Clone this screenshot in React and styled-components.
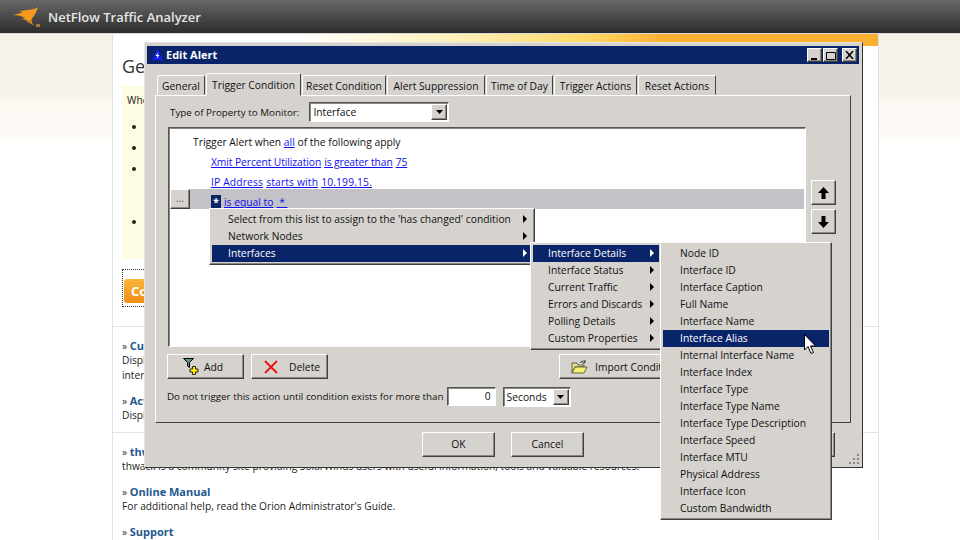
import React from 'react'
import styled, { createGlobalStyle, css } from 'styled-components'

const GlobalStyle = createGlobalStyle`
  html, body { margin: 0; padding: 0; background: #fff; }
  body { width: 960px; height: 540px; overflow: hidden; }
`

const raised = css`
  border: 1px solid;
  border-color: #fff #404040 #404040 #fff;
  box-shadow: inset -1px -1px 0 #8a8782;
`
const sunken = css`
  border: 1px solid;
  border-color: #555 #fff #fff #555;
  box-shadow: inset 1px 1px 0 #8a8782;
`
const uiFont = css`
  font-family: "Open Sans", "Liberation Sans", sans-serif;
  font-size: 10.3px;
  color: #111;
`

const Page = styled.div`
  position: relative;
  width: 960px;
  height: 540px;
  overflow: hidden;
  font-family: "Open Sans", "DejaVu Sans", sans-serif;
  font-size: 10.2px;
  color: #222;
`
const Header = styled.header`
  display: flex;
  align-items: center;
  gap: 6px;
  height: 34px;
  padding-left: 13px;
  box-sizing: border-box;
  background: linear-gradient(#686868, #2c2c2c);
  border-bottom: 1px solid #d8d8d8;
`
const BrandName = styled.div`
  font-size: 13px;
  font-weight: 600;
  color: #e6e6e6;
`
const Main = styled.div`
  display: flex;
  height: 506px;
`
const Gutter = styled.div`
  flex: ${p => p.$fixed ? '0 0 112px' : 1};
  background: linear-gradient(#f5f2e8, #f6f3ec 60px, #fdf7f2 70px, #fdf9f5 100px, #fff 110px);
`
const Column = styled.main`
  width: 767px;
  box-sizing: border-box;
  border-left: 1px solid #e2e2e2;
  border-right: 1px solid #e2e2e2;
  background: #fff;
`
const Banner = styled.div`
  height: 12px;
  background: linear-gradient(90deg, #fff 24%, #fff0b8 45%, #ffd966 62%, #fbb030 72%, #fbb030);
`
const Section = styled.section`
  padding: 0 9px;
`
const Heading = styled.h1`
  margin: 7px 0 7px;
  font-size: 18px;
  line-height: 26px;
  font-weight: 400;
  color: #333;
`
const Note = styled.div`
  background: #fdfbe2;
  width: 700px;
  height: 173px;
  box-sizing: border-box;
  padding: 6px 5px;
  line-height: 16px;
`
const Bullets = styled.ul`
  margin: 8px 0 0;
  padding: 0 0 0 19px;
`
const Bullet = styled.li`
  height: ${p => p.$tall ? 53 : 21}px;
  line-height: 21px;
`
const ActionBox = styled.div`
  display: inline-block;
  margin-top: 10px;
  width: 150px;
  height: 38px;
  box-sizing: border-box;
  padding: 9px 1px 0;
  border: 1px dotted #333;
`
const OrangeButton = styled.div`
  height: 24px;
  line-height: 24px;
  padding-left: 7px;
  border-radius: 3px;
  background: linear-gradient(#fbb43c, #ee8f16);
  color: #fff;
  font-size: 13px;
  font-weight: 700;
`
const Divided = styled.div`
  margin-top: ${p => p.$top}px;
  border-top: 1px solid #e2e2e2;
  padding: 11px 9px 0;
`
const LinkBlock = styled.div`
  margin-bottom: 10px;
  line-height: 15px;
`
const LinkTitle = styled.div`
  height: 15px;
  color: #333;
  b {
    color: #23588f;
    font-size: 11px;
    font-weight: 700;
  }
`

const Dialog = styled.div`
  position: absolute;
  left: 144px;
  top: 42px;
  width: 719px;
  height: 426px;
  box-sizing: border-box;
  padding: 3px 3px 3px 2px;
  background: #d6d3ce;
  border: 1px solid;
  border-color: #e8e6e2 #333 #333 #e8e6e2;
  ${uiFont}
`
const TitleBar = styled.div`
  display: flex;
  align-items: center;
  height: 18px;
  padding: 0 2px 0 5px;
  gap: 3px;
  background: #0a246a;
`
const TitleText = styled.div`
  flex: 1;
  padding-bottom: 1px;
  color: #fff;
  font-size: 11px;
  font-weight: 700;
`
const TitleButton = styled.div`
  ${raised}
  display: flex;
  align-items: center;
  justify-content: center;
  box-sizing: border-box;
  width: 15px;
  height: 14px;
  margin-left: ${p => p.$gap || 0}px;
  background: #d6d3ce;
`
const TabStrip = styled.div`
  display: flex;
  align-items: flex-end;
  height: 22px;
  margin: 9px 0 0 10px;
  gap: 1px;
`
const Tab = styled.div`
  display: flex;
  align-items: center;
  justify-content: center;
  box-sizing: border-box;
  width: ${p => p.$w}px;
  height: ${p => p.$active ? 23 : 20}px;
  padding-top: ${p => p.$active ? 0 : 1}px;
  margin-bottom: ${p => p.$active ? -1 : 0}px;
  background: #d6d3ce;
  border: 1px solid;
  border-color: #fff #404040 transparent #fff;
  border-radius: 2px 2px 0 0;
  position: relative;
  z-index: ${p => p.$active ? 1 : 0};
`
const TabPanel = styled.div`
  margin-left: 8px;
  width: 696px;
  height: 328px;
  box-sizing: border-box;
  padding: 6px 12px 0;
  border: 1px solid;
  border-color: #fff #404040 #404040 #fff;
`
const PropertyRow = styled.div`
  display: flex;
  align-items: center;
  height: 20px;
  padding-left: 2px;
  gap: 10px;
`
const Label = styled.span`
  font-size: 9.8px;
`
const Combo = styled.div`
  ${sunken}
  display: flex;
  align-items: center;
  justify-content: space-between;
  box-sizing: border-box;
  width: ${p => p.$w}px;
  height: 20px;
  margin-left: ${p => p.$push || 0}px;
  padding-left: 3px;
  background: #fff;
`
const ComboArrow = styled.div`
  ${raised}
  display: flex;
  align-items: center;
  justify-content: center;
  box-sizing: border-box;
  width: 16px;
  height: 16px;
  margin-right: 1px;
  background: #d6d3ce;
`
const Editor = styled.div`
  display: flex;
  gap: 5px;
  margin-top: 5px;
`
const ConditionList = styled.div`
  ${sunken}
  width: 638px;
  height: 220px;
  box-sizing: border-box;
  padding: 1px 1px 0;
  background: #fff;
`
const ConditionRow = styled.div`
  display: flex;
  align-items: flex-end;
  height: 20px;
  box-sizing: border-box;
  padding-left: ${p => p.$indent}px;
  gap: 3px;
  letter-spacing: ${p => p.$track || 0}px;
  background: ${p => p.$active ? '#c3c2c6' : 'transparent'};
`
const MoreButton = styled.div`
  ${raised}
  align-self: stretch;
  box-sizing: border-box;
  width: 20px;
  margin-right: 18px;
  text-align: center;
  line-height: 16px;
  background: #d6d3ce;
  color: #555;
`
const Link = styled.a`
  color: #1010ee;
  text-decoration: underline;
`
const Token = styled.span`
  display: inline-block;
  width: 10px;
  height: 13px;
  margin-bottom: 1px;
  line-height: 15px;
  text-align: center;
  background: #0a246a;
  color: #fff;
  font-weight: 700;
`
const SideButtons = styled.div`
  display: flex;
  flex-direction: column;
  gap: 4px;
  padding-top: 53px;
`
const SquareButton = styled.div`
  ${raised}
  display: flex;
  align-items: center;
  justify-content: center;
  box-sizing: border-box;
  width: 25px;
  height: 25px;
  background: #d6d3ce;
`
const ActionRow = styled.div`
  display: flex;
  gap: 7px;
  margin-top: 7px;
  margin-left: -1px;
`
const ActionButton = styled.div`
  ${raised}
  display: flex;
  align-items: center;
  gap: ${p => p.$gap}px;
  box-sizing: border-box;
  width: ${p => p.$w}px;
  height: 25px;
  margin-left: ${p => p.$push || 0}px;
  padding-left: ${p => p.$pad}px;
  background: #d6d3ce;
`
const DelayRow = styled.div`
  display: flex;
  align-items: center;
  height: 21px;
  margin: 7px 0 0 -1px;
  gap: 3px;
`
const DelayInput = styled.div`
  ${sunken}
  box-sizing: border-box;
  width: 49px;
  height: 19px;
  line-height: 17px;
  padding-right: 4px;
  text-align: right;
  background: #fff;
`
const Footer = styled.div`
  display: flex;
  gap: 16px;
  margin: 9px 0 0 275px;
`
const DialogButton = styled.div`
  ${raised}
  box-sizing: border-box;
  width: ${p => p.$w}px;
  height: 25px;
  line-height: 23px;
  text-align: center;
  background: #d6d3ce;
  margin-left: ${p => p.$push || 0}px;
`
const Grip = styled.svg`
  position: absolute;
  right: 2px;
  bottom: 2px;
`
const Menu = styled.div`
  ${raised}
  ${uiFont}
  position: absolute;
  left: ${p => p.$x}px;
  top: ${p => p.$y}px;
  width: ${p => p.$w}px;
  box-sizing: border-box;
  padding: 2px;
  background: #d6d3ce;
  z-index: ${p => p.$z};
`
const MenuItem = styled.div`
  display: flex;
  align-items: center;
  justify-content: space-between;
  box-sizing: border-box;
  height: 17px;
  padding: 0 5px 2px ${p => p.$pad}px;
  background: ${p => p.$on ? '#0a246a' : 'transparent'};
  color: ${p => p.$on ? '#fff' : '#111'};
`
const Pointer = styled.svg`
  position: absolute;
  left: 804px;
  top: 334px;
  z-index: 5;
`

const Logo = () => (
  <svg width="29" height="22" viewBox="0 0 29 22">
    <path d="M25 1C21 4 14 4 6 5L10 6.500L0 9C5 9 9 10 12 12L8 13C12 13 14 14 16 16C19 13 23 8 25 1Z" fill="#f59a1e" />
    <path d="M11 14C15 15 18 17 21 20C19 17 18 15 19 12L16.500 17.500C15 16 13 15 11 14Z" fill="#f59a1e" />
    <path d="M23 18H27V21H23Z" fill="#a8793c" />
  </svg>
)
const AppIcon = () => (
  <svg width="11" height="12" viewBox="0 0 11 12">
    <path d="M5.500 0L11 11H0Z" fill="#1a1aee" />
    <path d="M6.500 3L3.500 7H5.500L4.500 10L7.500 6H5.500Z" fill="#fff" />
  </svg>
)
const Caret = ({ color = '#000' }) => (
  <svg width="7" height="4" viewBox="0 0 7 4"><path d="M0 0H7L3.5 4Z" fill={color} /></svg>
)
const SubArrow = ({ color = '#000' }) => (
  <svg width="4" height="8" viewBox="0 0 4 8"><path d="M0 0L4 4L0 8Z" fill={color} /></svg>
)
const BlockArrow = ({ down }) => (
  <svg width="11" height="12" viewBox="0 0 11 12">
    <path d={down ? 'M3.5 0H7.5V6H11L5.5 12L0 6H3.5Z' : 'M5.5 0L11 6H7.5V12H3.5V6H0Z'} fill="#000" />
  </svg>
)
const FilterAddIcon = () => (
  <svg width="16" height="17" viewBox="0 0 16 17">
    <path d="M0.500 0.500H10.500L6.500 4.500V9.500L4.500 8V4.500Z" fill="#5f8f8c" stroke="#000" />
    <path d="M9.500 8.500H12.500V11H15V14H12.500V16.500H9.500V14H7V11H9.500Z" fill="#ffee00" stroke="#222" />
  </svg>
)
const RedCross = () => (
  <svg width="14" height="14" viewBox="0 0 14 14">
    <path d="M1 1L13 13M13 1L1 13" stroke="#f01010" strokeWidth="1.8" />
  </svg>
)
const FolderIcon = () => (
  <svg width="17" height="14" viewBox="0 0 17 14">
    <path d="M1 3H6L7 5H13V7H4L1 13Z" fill="#e8e080" stroke="#444" strokeWidth="0.8" />
    <path d="M4 7H16L13 13H1Z" fill="#f7ef70" stroke="#444" strokeWidth="0.8" />
    <path d="M9 3C10 1 12 1 14 1.500M14 0V3H11" fill="none" stroke="#222" strokeWidth="0.8" />
  </svg>
)

const tabs = [
  ['General', 48], ['Trigger Condition', 95], ['Reset Condition', 84], ['Alert Suppression', 98],
  ['Time of Day', 67], ['Trigger Actions', 83], ['Reset Actions', 78],
]
const firstMenu = ["Select from this list to assign to the 'has changed' condition", 'Network Nodes', 'Interfaces']
const secondMenu = ['Interface Details', 'Interface Status', 'Current Traffic', 'Errors and Discards', 'Polling Details', 'Custom Properties']
const thirdMenu = [
  'Node ID', 'Interface ID', 'Interface Caption', 'Full Name', 'Interface Name', 'Interface Alias',
  'Internal Interface Name', 'Interface Index', 'Interface Type', 'Interface Type Name',
  'Interface Type Description', 'Interface Speed', 'Interface MTU', 'Physical Address',
  'Interface Icon', 'Custom Bandwidth',
]

export default function App() {
  return (
    <Page>
      <GlobalStyle />
      <Header>
        <Logo />
        <BrandName>NetFlow Traffic Analyzer</BrandName>
      </Header>
      <Main>
        <Gutter $fixed />
        <Column>
          <Banner />
          <Section>
            <Heading>Getting Started</Heading>
            <Note>
              When an alert is triggered:
              <Bullets>
                <Bullet>Item</Bullet>
                <Bullet>Item</Bullet>
                <Bullet $tall>Item</Bullet>
                <Bullet>Item</Bullet>
              </Bullets>
            </Note>
            <ActionBox><OrangeButton>Configure</OrangeButton></ActionBox>
          </Section>
          <Divided $top={19}>
            <LinkBlock>
              <LinkTitle>» <b>Current Alerts</b></LinkTitle>
              Display alerts<br />interfaces
            </LinkBlock>
            <LinkBlock>
              <LinkTitle>» <b>Active Alerts</b></LinkTitle>
              Display alerts
            </LinkBlock>
          </Divided>
          <Divided $top={-1}>
            <LinkBlock>
              <LinkTitle>» <b>thwack</b></LinkTitle>
              thwack is a community site providing SolarWinds users with useful information, tools and valuable resources!
            </LinkBlock>
            <LinkBlock>
              <LinkTitle>» <b>Online Manual</b></LinkTitle>
              For additional help, read the Orion Administrator's Guide.
            </LinkBlock>
            <LinkBlock>
              <LinkTitle>» <b>Support</b></LinkTitle>
            </LinkBlock>
          </Divided>
        </Column>
        <Gutter />
      </Main>

      <Dialog>
        <TitleBar>
          <AppIcon />
          <TitleText>Edit Alert</TitleText>
          <TitleButton>
            <svg width="8" height="9" viewBox="0 0 8 9"><path d="M0 7H6V9H0Z" /></svg>
          </TitleButton>
          <TitleButton $gap={-2}>
            <svg width="10" height="9" viewBox="0 0 10 9"><path d="M0.500 1.500H9.500V8.500H0.500Z" fill="none" stroke="#000" /></svg>
          </TitleButton>
          <TitleButton $gap={1}>
            <svg width="9" height="8" viewBox="0 0 9 8"><path d="M1 0L8 8M8 0L1 8" stroke="#000" strokeWidth="1.500" /></svg>
          </TitleButton>
        </TitleBar>
        <TabStrip>
          {tabs.map(([label, w], i) => (
            <Tab key={label} $w={w} $active={i === 1}>{label}</Tab>
          ))}
        </TabStrip>
        <TabPanel>
          <PropertyRow>
            <Label>Type of Property to Monitor:</Label>
            <Combo $w={140}>Interface<ComboArrow><Caret /></ComboArrow></Combo>
          </PropertyRow>
          <Editor>
            <ConditionList>
              <ConditionRow $indent={23}>
                <span>Trigger Alert when <Link>all</Link> of the following apply</span>
              </ConditionRow>
              <ConditionRow $indent={41} $track={-0.09}>
                <Link>Xmit Percent Utilization</Link> <Link>is greater than</Link> <Link>75</Link>
              </ConditionRow>
              <ConditionRow $indent={41} $track={0.15}>
                <Link>IP Address</Link> <Link>starts with</Link> <Link>10.199.15.</Link>
              </ConditionRow>
              <ConditionRow $indent={0} $active>
                <MoreButton>...</MoreButton>
                <Token>*</Token>
                <Link>is equal to</Link> <Link>&nbsp;*&nbsp;</Link>
              </ConditionRow>
            </ConditionList>
            <SideButtons>
              <SquareButton><BlockArrow /></SquareButton>
              <SquareButton><BlockArrow down /></SquareButton>
            </SideButtons>
          </Editor>
          <ActionRow>
            <ActionButton $w={77} $pad={15} $gap={5}><FilterAddIcon />Add</ActionButton>
            <ActionButton $w={77} $pad={12} $gap={11}><RedCross />Delete</ActionButton>
            <ActionButton $w={240} $pad={11} $gap={7} $push={224}><FolderIcon />Import Conditions</ActionButton>
          </ActionRow>
          <DelayRow>
            <Label>Do not trigger this action until condition exists for more than</Label>
            <DelayInput>0</DelayInput>
            <Combo $w={68} $push={4}>Seconds<ComboArrow><Caret /></ComboArrow></Combo>
          </DelayRow>
        </TabPanel>
        <Footer>
          <DialogButton $w={73}>OK</DialogButton>
          <DialogButton $w={73}>Cancel</DialogButton>
          <DialogButton $w={73} $push={162}>Help</DialogButton>
        </Footer>
        <Grip width="12" height="12" viewBox="0 0 12 12">
          <path d="M9 1h2v2H9zM5 5h2v2H5zM9 5h2v2H9zM1 9h2v2H1zM5 9h2v2H5zM9 9h2v2H9z" fill="#8a8782" />
        </Grip>
      </Dialog>

      <Menu $x={209} $y={208} $w={326} $z={2}>
        {firstMenu.map((label, i) => (
          <MenuItem key={label} $pad={16} $on={i === 2}>
            {label}<SubArrow color={i === 2 ? '#fff' : '#000'} />
          </MenuItem>
        ))}
      </Menu>
      <Menu $x={530} $y={242} $w={132} $z={3}>
        {secondMenu.map((label, i) => (
          <MenuItem key={label} $pad={15} $on={i === 0}>
            {label}<SubArrow color={i === 0 ? '#fff' : '#000'} />
          </MenuItem>
        ))}
      </Menu>
      <Menu $x={660} $y={242} $w={172} $z={4}>
        {thirdMenu.map((label, i) => (
          <MenuItem key={label} $pad={17} $on={i === 5}>{label}</MenuItem>
        ))}
      </Menu>
      <Pointer width="13" height="21" viewBox="0 0 13 21">
        <path d="M0.500 0.500V16L4 12.500L7 19.500L9.500 18.500L6.500 12H11.500Z" fill="#fff" stroke="#000" />
      </Pointer>
    </Page>
  )
}
